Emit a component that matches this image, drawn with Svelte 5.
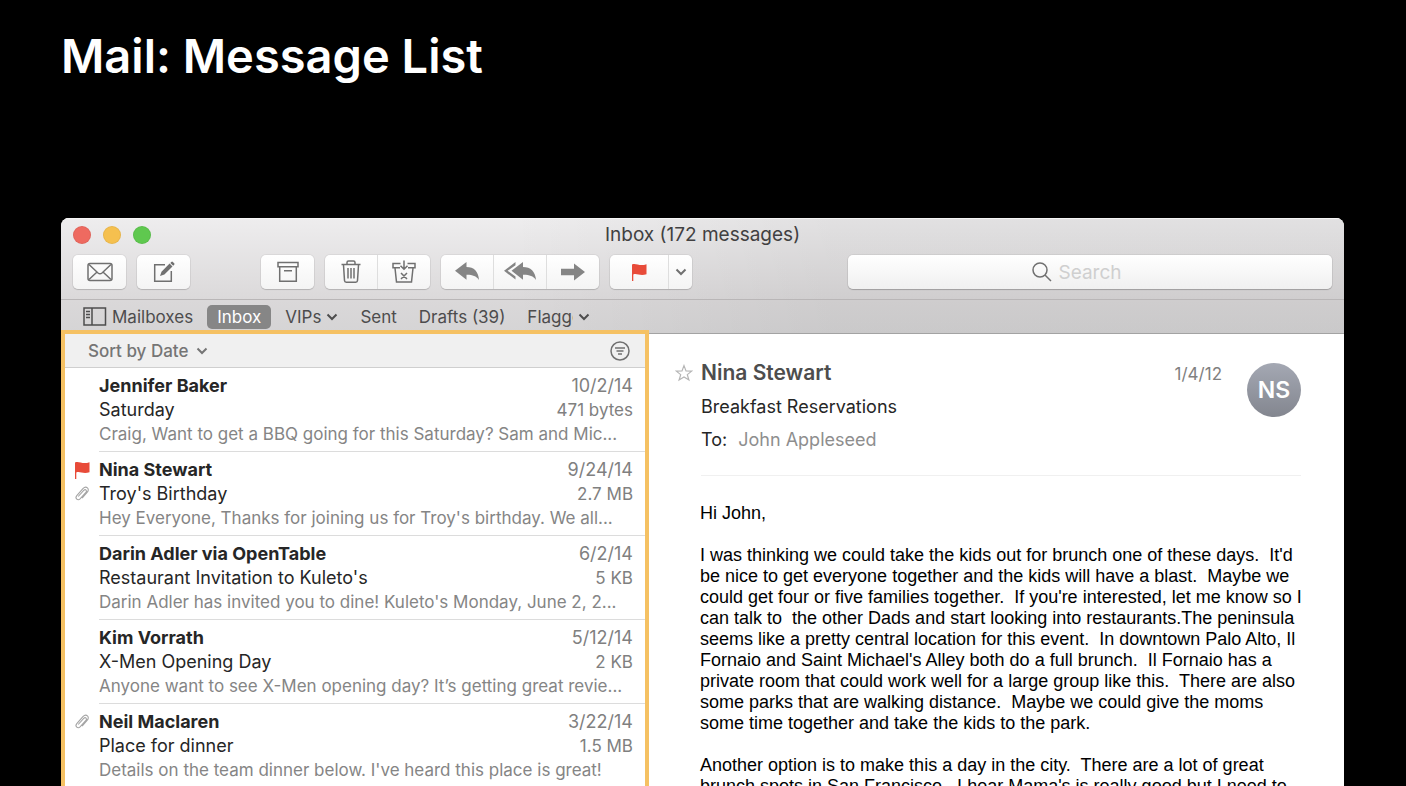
<script>
  const messages = [
    { from: 'Jennifer Baker', date: '10/2/14', subject: 'Saturday', size: '471 bytes', preview: 'Craig, Want to get a BBQ going for this Saturday? Sam and Mic...' },
    { from: 'Nina Stewart', date: '9/24/14', subject: "Troy's Birthday", size: '2.7 MB', preview: "Hey Everyone, Thanks for joining us for Troy's birthday. We all...", flagged: true, attachment: true },
    { from: 'Darin Adler via OpenTable', date: '6/2/14', subject: "Restaurant Invitation to Kuleto's", size: '5 KB', preview: "Darin Adler has invited you to dine! Kuleto's Monday, June 2, 2..." },
    { from: 'Kim Vorrath', date: '5/12/14', subject: 'X-Men Opening Day', size: '2 KB', preview: 'Anyone want to see X-Men opening day? It’s getting great revie...' },
    { from: 'Neil Maclaren', date: '3/22/14', subject: 'Place for dinner', size: '1.5 MB', preview: "Details on the team dinner below. I've heard this place is great!", attachment: true }
  ];

  const paragraphs = [
    'Hi John,',
    "I was thinking we could take the kids out for brunch one of these days.  It'd\nbe nice to get everyone together and the kids will have a blast.  Maybe we\ncould get four or five families together.  If you're interested, let me know so I\ncan talk to  the other Dads and start looking into restaurants.The peninsula\nseems like a pretty central location for this event.  In downtown Palo Alto, Il\nFornaio and Saint Michael's Alley both do a full brunch.  Il Fornaio has a\nprivate room that could work well for a large group like this.  There are also\nsome parks that are walking distance.  Maybe we could give the moms\nsome time together and take the kids to the park.",
    "Another option is to make this a day in the city.  There are a lot of great\nbrunch spots in San Francisco.  I hear Mama's is really good but I need to"
  ];
</script>

{#snippet chevron()}
  <svg class="chevron" viewBox="0 0 12 8" width="12" height="8" aria-hidden="true"><path d="M1.5 1.500 6 6l4.500-4.500" /></svg>
{/snippet}

{#snippet clip()}
  <svg class="clip" viewBox="0 0 16 18" width="16" height="18" aria-hidden="true">
    <path d="M4.200 11.500 9.700 5.400c1.800-1.700 3.800.2 2.200 2L6.300 13.700c-2.500 2.500-5.800-.4-3.500-3.100l6.100-7c3.300-3.400 7.300.1 4.400 3.500l-5.200 6" />
  </svg>
{/snippet}

<div class="page">
  <h1>Mail: Message List</h1>

  <div class="window">
    <header class="titlebar">
      <div class="title-row">
        <div class="lights">
          <button class="light red" aria-label="Close"></button>
          <button class="light yellow" aria-label="Minimize"></button>
          <button class="light green" aria-label="Zoom"></button>
        </div>
        <h2>Inbox (172 messages)</h2>
        <div></div>
      </div>

      <div class="toolbar">
        <div class="group">
          <button aria-label="Get mail">
            <svg viewBox="0 0 26 20" width="26" height="20"><rect x="1" y="1.500" width="24" height="17" rx="2" /><path d="m2 2.500 9 8.500q2 1.600 4 0l9-8.500M2 17.500l7.500-7M24 17.500l-7.500-7" /></svg>
          </button>
        </div>
        <div class="group compose">
          <button aria-label="New message">
            <svg viewBox="0 0 24 24" width="24" height="24"><path d="M13 4.700H2.700v16.600h16.600V11" /><path class="solid" d="m8 16 1.500-4.300L17.600 3.600l2.900 2.900-8.100 8.100zM18.300 2.900l1-1q.8-.7 1.600 0l1.300 1.300q.7.800 0 1.600l-1 1z" /></svg>
          </button>
        </div>
        <div class="group">
          <button aria-label="Archive">
            <svg viewBox="0 0 22 22" width="22" height="22"><path d="M1 1.500h20v4.300H1zM2.700 6v14.300h16.600V6M7 9.700h8" /></svg>
          </button>
        </div>
        <div class="group">
          <button aria-label="Delete">
            <svg viewBox="0 0 20 24" width="20" height="24"><path d="M.5 4.500h19M6 4V2.500Q6 1 7.500 1h5Q14 1 14 2.500V4M2.500 5l1 15.500q.1 1.700 1.700 1.700h9.600q1.600 0 1.700-1.700l1-15.500M7 8v10.500M10 8v10.500M13 8v10.500" /></svg>
          </button>
          <button aria-label="Junk">
            <svg viewBox="0 0 24 24" width="24" height="24"><path d="M8.500 3.500H1v4.200h7M15.500 3.500H23v4.200h-7M3 8l1.500 14h15L21 8M12 .500v8.300M8.500 5.800 12 9.300l3.500-3.500M9 13l6 6M15 13l-6 6" /></svg>
          </button>
        </div>
        <div class="group">
          <button aria-label="Reply">
            <svg class="fill" viewBox="0 0 24 20" width="24" height="20"><path d="M0 8.800 11.500 0v5c7.500 0 12 4.500 12.500 13-3-4-6.500-5.300-12.500-5.200v5z" /></svg>
          </button>
          <button aria-label="Reply all">
            <svg class="fill" viewBox="0 0 32 20" width="32" height="20"><path d="M7.500 8.800 19 0v5c7.500 0 12.500 4.500 13 13-3-4-6.500-5.300-13-5.200v5z" /><path d="M11.500 0v3.200L3.600 8.800l7.900 5.600v3.200L0 8.800z" /></svg>
          </button>
          <button aria-label="Forward">
            <svg class="fill" viewBox="0 0 24 18" width="24" height="18"><path d="M0 5.700h13V.5L24 9l-11 8.500v-5.200H0z" /></svg>
          </button>
        </div>
        <div class="group flagging">
          <button class="wide" aria-label="Flag">
            <svg class="flag" viewBox="0 0 16 18" width="16" height="18"><path d="M1 1.500C5-.5 8 3.800 15.500 1.300v10C9 13.500 6 10 2.300 11.500V18H1z" /></svg>
          </button>
          <button class="narrow" aria-label="Flag colors">{@render chevron()}</button>
        </div>
        <label class="search">
          <svg viewBox="0 0 20 20" width="20" height="20" aria-hidden="true"><circle cx="8" cy="8" r="7" /><path d="m13 13 6 6" /></svg>
          <input type="text" placeholder="Search" aria-label="Search" />
        </label>
      </div>
    </header>

    <nav class="favorites">
      <button class="mailboxes">
        <svg viewBox="0 0 24 19" width="24" height="19" aria-hidden="true"><path d="M1 1h21.500v17H1zM9 1v17M3 4.500h4M3 7.500h4M3 10.500h4" /></svg>
        Mailboxes
      </button>
      <a class="current" href="#inbox">Inbox</a>
      <a href="#vips">VIPs {@render chevron()}</a>
      <a href="#sent">Sent</a>
      <a href="#drafts">Drafts (39)</a>
      <a class="flagged" href="#flagged"><span>Flagged</span>{@render chevron()}</a>
    </nav>

    <main class="content">
      <section class="list">
        <div class="sortbar">
          <button class="sort">Sort by Date {@render chevron()}</button>
          <button class="filter" aria-label="Filter">
            <svg viewBox="0 0 20 20" width="20" height="20"><circle cx="10" cy="10" r="9" /><path d="M5 7h10M6.500 10h7M8 13h4" /></svg>
          </button>
        </div>
        <ul>
          {#each messages as m}
            <li>
              <div class="marks">
                {#if m.flagged}
                  <svg class="flag" viewBox="0 0 16 18" width="16" height="18" aria-label="Flagged"><path d="M1 1.500C5-.5 8 3.800 15.500 1.300v10C9 13.500 6 10 2.300 11.500V18H1z" /></svg>
                {/if}
                {#if m.attachment}{@render clip()}{/if}
              </div>
              <div class="message">
                <div class="line"><strong>{m.from}</strong><time>{m.date}</time></div>
                <div class="line"><span>{m.subject}</span><small>{m.size}</small></div>
                <p>{m.preview}</p>
              </div>
            </li>
          {/each}
        </ul>
        <div class="highlight"></div>
      </section>

      <article>
        <header class="mail-head">
          <button class="star" aria-label="Add to VIPs">
            <svg viewBox="0 0 18 18" width="18" height="18"><path d="m9 1.600 2 5.300 5.700.2-4.400 3.500 1.600 5.400L9 12.900 4.100 16l1.600-5.400L1.300 7.100 7 6.900z" /></svg>
          </button>
          <div class="details">
            <div class="who">
              <h3>Nina Stewart</h3>
              <p>Breakfast Reservations</p>
              <p>To: <span>John Appleseed</span></p>
            </div>
            <time>1/4/12</time>
            <div class="avatar">NS</div>
          </div>
        </header>
        <div class="body">
          {#each paragraphs as text}
            <p>{text}</p>
          {/each}
        </div>
      </article>
    </main>
  </div>
</div>

<style>
  :global(body) {
    margin: 0;
    background: #000;
  }

  .page {
    box-sizing: border-box;
    height: 100vh;
    overflow: hidden;
    padding: 0 62px 0 61px;
    font-family: Inter, 'Liberation Sans', sans-serif;
    font-size: 18px;
    color: #262626;
  }

  h1, h2, h3, p, ul {
    margin: 0;
    padding: 0;
    font-weight: 400;
  }

  h1 {
    padding: 24px 0 130px;
    font-size: 47px;
    line-height: 64px;
    font-weight: 600;
    color: #fff;
  }

  button {
    margin: 0;
    padding: 0;
    border: 0;
    background: none;
    font: inherit;
    color: inherit;
  }

  svg {
    display: block;
    flex: none;
    fill: none;
    stroke: #707070;
    stroke-width: 1.5;
  }

  .solid {
    fill: #707070;
    stroke: none;
  }

  .window {
    border-radius: 8px 8px 0 0;
    overflow: hidden;
    background: #fff;
  }

  .titlebar {
    background:
      linear-gradient(90deg, rgba(0, 0, 0, 0) 35%, rgba(0, 0, 0, 0.05) 60%),
      linear-gradient(#eeedee, #dbd9da);
    border-bottom: 1px solid #b9b6b7;
    box-shadow: inset 0 1px #f5f5f5;
  }

  .title-row {
    display: grid;
    grid-template-columns: 1fr auto 1fr;
    align-items: center;
    height: 33px;
    padding: 0 12px;
  }

  h2 {
    font-size: 19px;
    color: #414041;
  }

  .lights {
    display: flex;
    gap: 12px;
  }

  .light {
    width: 18px;
    height: 18px;
    border-radius: 50%;
    box-shadow: inset 0 0 0 1px rgba(0, 0, 0, 0.06);
  }

  .red { background: #ee6a60; }
  .yellow { background: #f5c04f; }
  .green { background: #5fc84f; }

  .toolbar {
    display: flex;
    gap: 11px;
    padding: 4px 12px 10px;
  }

  .group {
    display: flex;
    height: 34px;
    border-radius: 5px;
    background: linear-gradient(#fff, #f4f4f4);
    box-shadow: 0 0 0 1px rgba(0, 0, 0, 0.05), 0 1px 1px rgba(0, 0, 0, 0.14);
  }

  .group button {
    display: grid;
    place-items: center;
    width: 53px;
  }

  .group button:first-child:not(:last-child) { width: 52px; }

  .group button + button { border-left: 1px solid #dedede; }

  .group .wide:first-child:not(:last-child) { width: 58px; }

  .group .narrow { width: 24px; }

  .compose { margin-right: 60px; }
  .flagging { margin-right: 145px; }

  .fill {
    fill: #858585;
    stroke: none;
  }

  .flag {
    fill: #e84b39;
    stroke: none;
  }

  .chevron {
    stroke: #4d4d4d;
    stroke-width: 2;
  }

  .narrow .chevron { stroke: #707070; }

  .search {
    flex: 1;
    display: flex;
    align-items: center;
    justify-content: center;
    gap: 7px;
    border-radius: 5px;
    background: linear-gradient(#fff, #f0f0f0);
    box-shadow: 0 0 0 1px rgba(0, 0, 0, 0.05), 0 1px 1px rgba(0, 0, 0, 0.2);
  }

  .search input {
    width: 90px;
    padding: 0;
    border: 0;
    background: none;
    outline: none;
    font: inherit;
    font-size: 19px;
  }

  .search input::placeholder {
    color: #cfcfcf;
    opacity: 1;
  }

  .favorites {
    display: flex;
    align-items: center;
    gap: 22px;
    height: 33px;
    padding-left: 22px;
    background:
      linear-gradient(90deg, rgba(0, 0, 0, 0) 35%, rgba(0, 0, 0, 0.05) 60%),
      linear-gradient(#dad8d9, #d5d4d5);
    border-bottom: 1px solid #a3a3a3;
    color: #4d4c4d;
  }

  .favorites a,
  .mailboxes {
    display: flex;
    align-items: center;
    gap: 5px;
    line-height: 24px;
    font-size: 17px;
    color: inherit;
    text-decoration: none;
  }

  .favorites .mailboxes,
  .favorites .current {
    margin-right: -8px;
  }

  .mailboxes svg { stroke: #4d4d4d; }

  .favorites .current {
    padding: 0 10px;
    border-radius: 5px;
    background: #868686;
    color: #fff;
  }

  .flagged span {
    width: 46px;
    overflow: hidden;
  }

  .content {
    display: grid;
    grid-template-columns: 588fr 695fr;
  }

  .list {
    position: relative;
    min-width: 0;
    padding: 0 4px;
  }

  .highlight {
    position: absolute;
    inset: -4px 0 0;
    border: 4px solid #f5c163;
    border-bottom: 0;
    pointer-events: none;
  }

  .sortbar {
    display: flex;
    align-items: center;
    justify-content: space-between;
    height: 33px;
    padding: 0 15px 0 23px;
    background: #f0f0f0;
    border-bottom: 1px solid #cfcfcf;
  }

  .sort {
    display: flex;
    align-items: center;
    gap: 8px;
    font-size: 17px;
    font-weight: 500;
    color: #757575;
  }

  .sort .chevron { stroke: #757575; }

  ul { list-style: none; }

  li {
    display: grid;
    grid-template-columns: 34px 1fr;
  }

  .marks {
    display: flex;
    flex-direction: column;
    gap: 6px;
    padding: 9px 0 0 9px;
  }

  .clip {
    stroke: #a5a5a5;
    stroke-width: 1.1;
  }

  .message {
    min-width: 0;
    padding: 6px 12px 5px 0;
    border-bottom: 1px solid #dcdcdc;
    line-height: 24px;
  }

  .line {
    display: flex;
    justify-content: space-between;
    height: 24px;
  }

  strong { font-weight: 700; }

  .line time { color: #808080; }

  small {
    font-size: 17px;
    color: #808080;
  }

  .message p {
    font-size: 17px;
    color: #858585;
    white-space: nowrap;
  }

  article {
    min-width: 0;
    padding: 26px 43px 0 26px;
  }

  .mail-head {
    display: flex;
    align-items: flex-start;
  }

  .star {
    padding-top: 4px;
    width: 26px;
  }

  .star svg {
    stroke: #b5b5b5;
    stroke-width: 1.2;
  }

  .details {
    flex: 1;
    display: flex;
    align-items: flex-start;
    height: 115px;
    border-bottom: 1px solid #f0f0f0;
  }

  .who { flex: 1; }

  h3 {
    line-height: 26px;
    font-size: 21px;
    font-weight: 600;
    color: #4d4d4d;
  }

  .who p {
    padding-top: 9px;
    line-height: 24px;
  }

  .who span {
    margin-left: 6px;
    color: #8e8e8e;
  }

  .details time {
    line-height: 28px;
    font-size: 17px;
    color: #808080;
    margin-right: 25px;
  }

  .avatar {
    display: grid;
    place-items: center;
    width: 54px;
    height: 54px;
    margin-top: 3px;
    border-radius: 50%;
    background: linear-gradient(#a4a8b3, #83868f);
    color: #fff;
    font-size: 23px;
    font-weight: 600;
  }

  .body {
    padding: 27px 0 0 25px;
    font-family: 'Liberation Sans', Arial, sans-serif;
    line-height: 21px;
    color: #000;
  }

  .body p {
    margin-bottom: 21px;
    white-space: pre;
  }
</style>
